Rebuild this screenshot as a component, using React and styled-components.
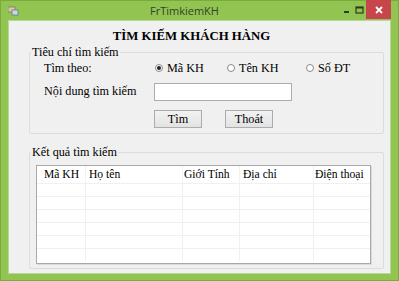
import React from "react";
import styled, { createGlobalStyle } from "styled-components";

const Global = createGlobalStyle`
  html, body { margin: 0; padding: 0; background: #8fc14e; }
  * { box-sizing: border-box; }
`;

const Frame = styled.div`
  width: 399px;
  height: 281px;
  background: #92c452;
  border: 1px solid #7aab3c;
  display: flex;
  flex-direction: column;
  padding: 0 7px 6px 7px;
`;

const TitleBar = styled.div`
  height: 19px;
  display: flex;
  align-items: center;
  font-family: "Open Sans", "Liberation Sans", sans-serif;
  font-size: 11px;
  color: #34422a;
`;

const AppIcon = styled.div`
  width: 12px;
  height: 10px;
  display: flex;
  align-items: center;
`;

const Caption = styled.div`
  flex: 1;
  text-align: center;
  padding-left: 8px;
`;

const Controls = styled.div`
  display: flex;
  align-items: stretch;
  height: 19px;
  align-self: flex-start;
  margin-top: -1px;
`;

const CtlButton = styled.div`
  width: ${(p) => p.$w}px;
  display: flex;
  align-items: center;
  justify-content: center;
  background: ${(p) => (p.$close ? "#c7464c" : "transparent")};
`;

const Client = styled.div`
  flex: 1;
  background: #f0f0f0;
  border: 1px solid #b8d59a;
  display: flex;
  flex-direction: column;
  padding: 8px 6px 2px 20px;
  font-family: "Liberation Serif", "Times New Roman", serif;
  font-size: 12.2px;
  color: #000;
`;

const Heading = styled.h1`
  margin: 0 0 0 -30px;
  font-size: 12.8px;
  font-weight: bold;
  text-align: center;
  line-height: 15px;
`;

const Group = styled.fieldset`
  margin: ${(p) => p.$top}px 0 0 0;
  padding: 0;
  border: 1px solid #dcdcdc;
  border-radius: 2px;
  height: ${(p) => p.$h}px;
  min-width: 0;
`;

const Legend = styled.legend`
  padding: 0 1px;
  margin-left: 1px;
  line-height: 14px;
`;

const Criteria = styled.div`
  display: grid;
  grid-template-columns: 110px 72px 79px auto;
  grid-template-rows: 18px 28px 24px;
  align-items: center;
  padding: 0 0 0 14px;
`;

const Label = styled.div``;

const Radio = styled.label`
  display: flex;
  align-items: center;
  gap: 4px;
`;

const Dot = styled.span`
  width: 8px;
  height: 8px;
  border-radius: 50%;
  border: 1px solid #8a8a8a;
  background: #fff;
  display: flex;
  align-items: center;
  justify-content: center;
  margin-left: 1px;
  &::after {
    content: "";
    width: 4px;
    height: 4px;
    border-radius: 50%;
    background: ${(p) => (p.$on ? "#222" : "transparent")};
  }
`;

const Input = styled.div`
  grid-column: 2 / span 3;
  width: 138px;
  height: 18px;
  background: #fff;
  border: 1px solid #abadb3;
  margin-top: 1px;
`;

const Buttons = styled.div`
  grid-column: 2 / span 3;
  display: flex;
  gap: 23px;
  padding-top: 4px;
`;

const Button = styled.div`
  width: 48px;
  height: 18px;
  border: 1px solid #acacac;
  background: linear-gradient(#f2f2f2, #e3e3e3);
  display: flex;
  align-items: center;
  justify-content: center;
`;

const ListView = styled.div`
  margin: 6px 0 0 6px;
  width: 335px;
  height: 99px;
  background: #fff;
  border: 1px solid #a9a9a9;
  box-shadow: 1px 1px 0 #dadada;
  display: grid;
  grid-template-columns: 48px 97px 57px 74px auto;
  grid-template-rows: 17px repeat(6, 13px);
  overflow: hidden;
  font-size: 11.6px;
`;

const Head = styled.div`
  padding-left: ${(p) => p.$pad}px;
  padding-top: 1px;
  line-height: 15px;
  white-space: nowrap;
  border-left: ${(p) => (p.$first ? "none" : "1px solid #f2f2f2")};
`;

const Cell = styled.div`
  border-top: 1px solid #f0f0f0;
  border-left: ${(p) => (p.$first ? "none" : "1px solid #f0f0f0")};
`;

const columns = [
  { title: "Mã KH", pad: 7 },
  { title: "Họ tên", pad: 3 },
  { title: "Giới Tính", pad: 1 },
  { title: "Địa chỉ", pad: 3 },
  { title: "Điện thoại", pad: 1 },
];

export default function App() {
  return (
    <>
      <Global />
      <Frame>
        <TitleBar>
          <AppIcon>
            <svg width="11" height="10" viewBox="0 0 11 10">
              <rect x="0" y="1" width="7" height="5" fill="#d8c8a8" stroke="#8a7a5a" strokeWidth="0.8" />
              <rect x="4" y="4" width="6" height="5" fill="#c8d8e8" stroke="#6a7a8a" strokeWidth="0.8" />
            </svg>
          </AppIcon>
          <Caption>FrTimkiemKH</Caption>
          <Controls>
            <CtlButton $w={11}>
              <svg width="8" height="8" viewBox="0 0 8 8">
                <rect x="1" y="5" width="5" height="2" fill="#2c3a20" />
              </svg>
            </CtlButton>
            <CtlButton $w={14}>
              <svg width="9" height="8" viewBox="0 0 9 8">
                <rect x="1" y="1" width="7" height="6" fill="none" stroke="#2c3a20" strokeWidth="1.2" />
                <rect x="1" y="1" width="7" height="1.5" fill="#2c3a20" />
              </svg>
            </CtlButton>
            <CtlButton $w={25} $close>
              <svg width="8" height="8" viewBox="0 0 8 8">
                <path d="M1 1 L7 7 M7 1 L1 7" stroke="#fff" strokeWidth="1.8" />
              </svg>
            </CtlButton>
          </Controls>
        </TitleBar>
        <Client>
          <Heading>TÌM KIẾM KHÁCH HÀNG</Heading>
          <Group $top={1} $h={89}>
            <Legend>Tiêu chí tìm kiếm</Legend>
            <Criteria>
              <Label>Tìm theo:</Label>
              <Radio><Dot $on />Mã KH</Radio>
              <Radio><Dot />Tên KH</Radio>
              <Radio><Dot />Số ĐT</Radio>
              <Label>Nội dung tìm kiếm</Label>
              <Input />
              <Buttons>
                <Button>Tìm</Button>
                <Button>Thoát</Button>
              </Buttons>
            </Criteria>
          </Group>
          <Group $top={11} $h={124}>
            <Legend>Kết quả tìm kiếm</Legend>
            <ListView>
              {columns.map((c, i) => (
                <Head key={c.title} $pad={c.pad} $first={i === 0}>{c.title}</Head>
              ))}
              {Array.from({ length: 30 }).map((_, i) => (
                <Cell key={i} $first={i % 5 === 0} />
              ))}
            </ListView>
          </Group>
        </Client>
      </Frame>
    </>
  );
}
